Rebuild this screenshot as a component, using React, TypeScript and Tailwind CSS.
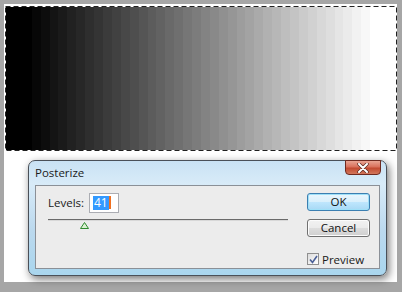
import React from "react";

const bands = Array.from({ length: 44 }, (_, i) => {
  const t = Math.min(1, Math.max(0, (i - 2) / 39));
  return Math.round(t * 255);
});

export default function App() {
  return (
    <div
      className="w-[402px] h-[292px] bg-[#a6a6a6] pt-[4px] pl-[4px] pr-[5px] pb-[10px] overflow-hidden"
      style={{ fontFamily: '"Open Sans", "Noto Sans", sans-serif' }}
    >
      <div className="w-full h-full bg-white flex flex-col">
        {/* gradient */}
        <div className="relative ml-[1px] mt-[2px] mr-0 h-[145px] flex">
          {bands.map((v, i) => (
            <div key={i} className="flex-1" style={{ backgroundColor: `rgb(${v},${v},${v})` }} />
          ))}
          <svg className="absolute inset-0 w-full h-full" viewBox="0 0 392 145" preserveAspectRatio="none">
            <rect x="0.5" y="0.5" width="391" height="144" fill="none" stroke="#ffffff" strokeWidth="1" />
            <rect x="0.5" y="0.5" width="391" height="144" fill="none" stroke="#202020" strokeWidth="1" strokeDasharray="5 3" />
          </svg>
        </div>

        {/* dialog */}
        <div className="ml-[24px] mt-[9px] w-[359px] h-[116px] rounded-[7px] border border-[#4a5058] bg-[linear-gradient(180deg,#c9e2f4_0%,#d8ebf8_20%,#bcd9ee_60%,#a9d6ee_100%)] shadow-[2px_3px_8px_rgba(0,0,0,0.55)] flex flex-col px-[6px] pb-[6px]">
          <div className="h-[24px] flex items-start justify-between relative">
            <span className="text-[11.5px] text-[#1a1a1a] leading-none mt-[6px] ml-[0px]">Posterize</span>
            <div className="w-[36px] h-[15px] mr-[-1px] mt-[-1px] rounded-b-[4px] border border-[#6e2a20] bg-[linear-gradient(180deg,#e9a493_0%,#d9715c_45%,#c24a31_55%,#d2775b_100%)] flex items-center justify-center">
              <svg width="12" height="10" viewBox="0 0 12 10">
                <path d="M2 1 L10 9 M10 1 L2 9" stroke="#5a2a22" strokeWidth="3.4" strokeLinecap="round" />
                <path d="M2 1 L10 9 M10 1 L2 9" stroke="#ffffff" strokeWidth="2" strokeLinecap="round" />
              </svg>
            </div>
          </div>
          <div className="flex-1 bg-[#ececec] border border-[#8b9097] flex">
            <div className="flex-1 flex flex-col pl-[12px] pt-[7px]">
              <div className="flex items-center h-[20px]">
                <span className="text-[11.5px] text-[#1a1a1a] w-[41px]">Levels:</span>
                <div className="w-[30px] h-[20px] bg-white border border-[#abadb3] flex items-center pl-[3px]">
                  <span className="text-[12px] leading-[14px] bg-[#3399ff] text-white px-[1px]">41</span>
                  <span className="w-[2px] h-[13px] bg-[#f07020]" />
                </div>
              </div>
              <div className="relative mt-[6px] w-[240px] h-[2px] bg-[#6a6a6a] border-b border-[#d8d8d8]">
                <svg className="absolute left-[32px] top-[3px]" width="9" height="7" viewBox="0 0 9 7">
                  <path d="M4.5 0.5 L8.5 6.5 L0.5 6.5 Z" fill="#d8f0d0" stroke="#2f8a2f" strokeWidth="1" />
                </svg>
              </div>
            </div>
            <div className="w-[63px] mr-[9px] flex flex-col pt-[7px]">
              <div className="h-[18px] rounded-[3px] border border-[#3c7fb1] bg-[linear-gradient(180deg,#eaf6fd_0%,#d9f0fc_48%,#bee6fd_52%,#a7d9f5_100%)] shadow-[inset_0_0_0_1px_#9fe0f8] flex items-center justify-center text-[11.5px] text-[#111]">
                OK
              </div>
              <div className="mt-[8px] h-[18px] rounded-[3px] border border-[#707070] bg-[linear-gradient(180deg,#f2f2f2_0%,#ebebeb_48%,#dddddd_52%,#cfcfcf_100%)] shadow-[inset_0_0_0_1px_#fcfcfc] flex items-center justify-center text-[11.5px] text-[#111]">
                Cancel
              </div>
              <div className="mt-[14px] flex items-center">
                <div className="w-[12px] h-[12px] border border-[#8f8f8f] bg-[linear-gradient(135deg,#dcdcdc,#ffffff)] flex items-center justify-center">
                  <svg width="9" height="9" viewBox="0 0 9 9">
                    <path d="M1 4.5 L3.5 7.5 L8 1" fill="none" stroke="#4a5f97" strokeWidth="1.6" />
                  </svg>
                </div>
                <span className="ml-[3px] text-[11.5px] text-[#1a1a1a]">Preview</span>
              </div>
            </div>
          </div>
        </div>
      </div>
    </div>
  );
}
